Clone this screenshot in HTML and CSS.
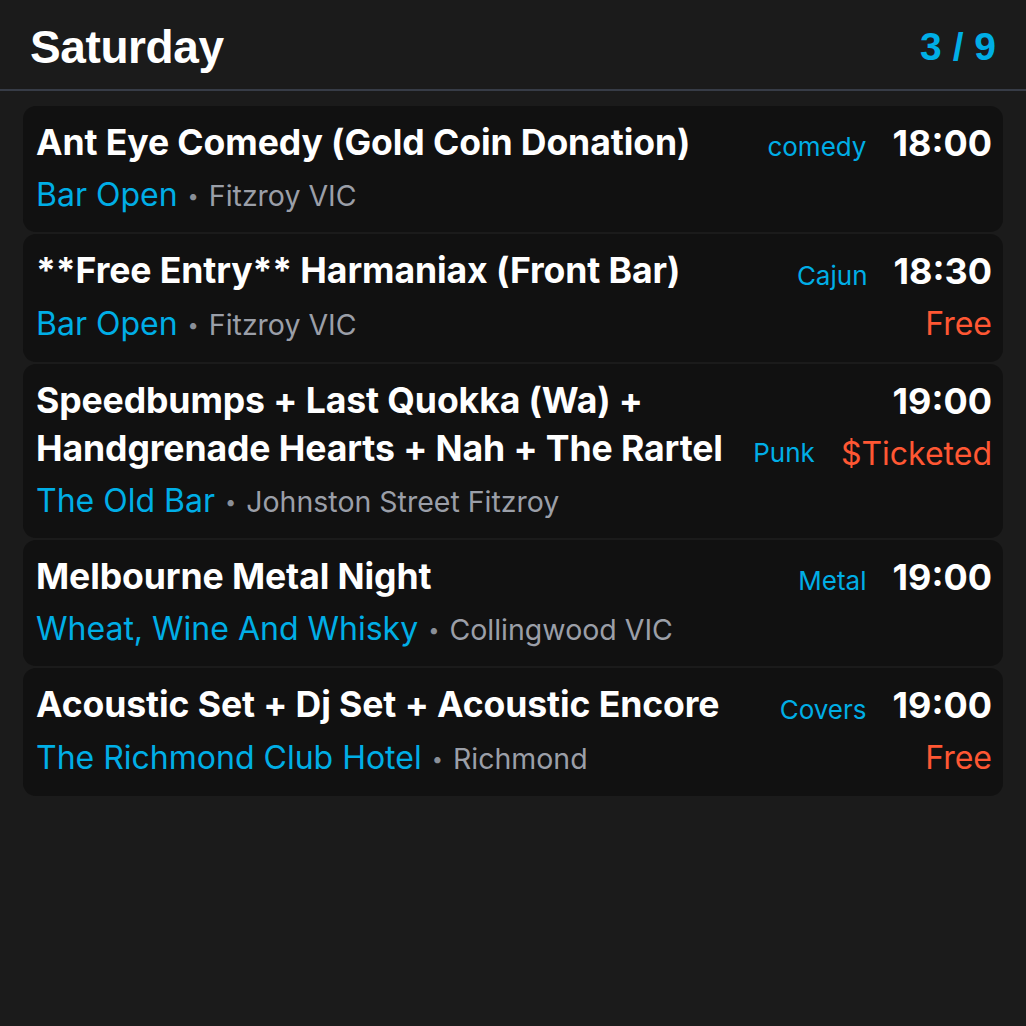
FILE: index.html
```html
<!DOCTYPE html>
<html>
<head>
<meta charset="utf-8">
<link rel="stylesheet" href="styles.css">
</head>
<body>
<div class="page">
  <header class="head">
    <h1 class="day">Saturday</h1>
    <div class="count">3 / 9</div>
  </header>
  <main class="list">
    <article class="card">
      <div class="title">Ant Eye Comedy (Gold Coin Donation)</div>
      <div class="genre">comedy</div>
      <div class="side"><div class="time">18:00</div></div>
      <div class="venue"><span class="vname">Bar Open</span><span class="dot">•</span><span class="loc">Fitzroy VIC</span></div>
    </article>
    <article class="card">
      <div class="title">**Free Entry** Harmaniax (Front Bar)</div>
      <div class="genre">Cajun</div>
      <div class="side"><div class="time">18:30</div><div class="price">Free</div></div>
      <div class="venue"><span class="vname">Bar Open</span><span class="dot">•</span><span class="loc">Fitzroy VIC</span></div>
    </article>
    <article class="card">
      <div class="title">Speedbumps + Last Quokka (Wa) + Handgrenade Hearts + Nah + The Rartel</div>
      <div class="genre">Punk</div>
      <div class="side"><div class="time">19:00</div><div class="price">$Ticketed</div></div>
      <div class="venue"><span class="vname">The Old Bar</span><span class="dot">•</span><span class="loc">Johnston Street Fitzroy</span></div>
    </article>
    <article class="card">
      <div class="title">Melbourne Metal Night</div>
      <div class="genre">Metal</div>
      <div class="side"><div class="time">19:00</div></div>
      <div class="venue"><span class="vname">Wheat, Wine And Whisky</span><span class="dot">•</span><span class="loc">Collingwood VIC</span></div>
    </article>
    <article class="card">
      <div class="title">Acoustic Set + Dj Set + Acoustic Encore</div>
      <div class="genre">Covers</div>
      <div class="side"><div class="time">19:00</div><div class="price">Free</div></div>
      <div class="venue"><span class="vname">The Richmond Club Hotel</span><span class="dot">•</span><span class="loc">Richmond</span></div>
    </article>
  </main>
</div>
</body>
</html>
```
FILE: styles.css
```css
html, body {
  margin: 0;
  padding: 0;
  background: #1b1b1b;
}
body {
  font-family: Inter, "Noto Sans", sans-serif;
  color: #ffffff;
  width: 1026px;
  height: 1026px;
  overflow: hidden;
}
.head {
  display: flex;
  justify-content: space-between;
  align-items: center;
  padding: 4px 30px 0 30px;
  border-bottom: 2px solid #373c47;
  box-sizing: border-box;
  height: 91px;
}
.day {
  margin: 0;
  font-family: "Liberation Sans", Arial, sans-serif;
  font-weight: 700;
  font-size: 46px;
  letter-spacing: -0.4px;
  color: #ffffff;
}
.count {
  font-family: "Liberation Sans", Arial, sans-serif;
  font-weight: 700;
  font-size: 39px;
  color: #00aee6;
}
.list {
  display: flex;
  flex-direction: column;
  gap: 2px;
  padding: 15px 23px 0 23px;
}
.card {
  background: #111111;
  border-radius: 13px;
  padding: 13px 11px 10px 13px;
  display: grid;
  grid-template-columns: 1fr auto auto;
  grid-template-areas:
    "title genre side"
    "venue venue side";
  align-items: start;
}
.title {
  grid-area: title;
  font-size: 35.6px;
  font-weight: 700;
  line-height: 48px;
  letter-spacing: -0.1px;
  padding-right: 22px;
}
.genre {
  grid-area: genre;
  align-self: end;
  font-size: 26px;
  line-height: 40px;
  color: #00aee6;
  margin-right: 26px;
}
.side {
  grid-area: side;
  display: flex;
  flex-direction: column;
  align-items: flex-end;
}
.time {
  font-size: 36px;
  font-weight: 700;
  line-height: 48px;
}
.price {
  font-size: 32px;
  line-height: 57px;
  color: #ff5733;
}
.venue {
  grid-area: venue;
  font-size: 32px;
  line-height: 55px;
  height: 55px;
  white-space: nowrap;
}
.vname {
  color: #00aee6;
}
.dot {
  font-size: 20px;
  line-height: 1;
  color: #8a8f98;
  margin: 0 10px 0 10px;
  vertical-align: 3px;
}
.loc {
  font-size: 28.5px;
  line-height: 1;
  color: #9b9fa8;
}
```
